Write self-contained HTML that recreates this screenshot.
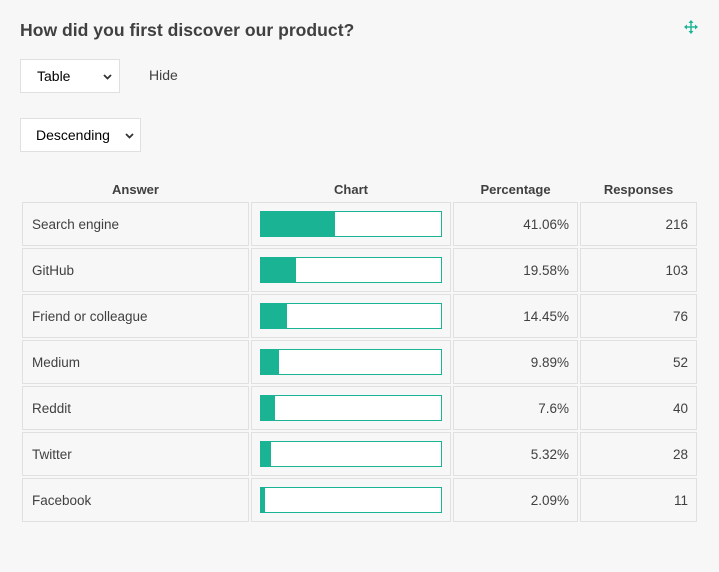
<!DOCTYPE html>
<html><head><style>
body{margin:0;width:719px;height:572px;background:#f7f7f7;font-family:"Liberation Sans",sans-serif;color:#404040;position:relative;overflow:hidden}
.a{position:absolute}
h1{position:absolute;left:20px;top:20px;margin:0;font-size:17.6px;font-weight:bold;color:#404040}
.sel{position:absolute;background:#fff;border:1px solid #e0e0e0;font-size:14px;color:#000;box-sizing:border-box}
.sel span{position:absolute;top:8px}
.sel svg{position:absolute}
.c{position:absolute;border:1px solid #e0e0e0;box-sizing:border-box;height:44px;font-size:13.5px;line-height:44px;color:#404040}
.th{position:absolute;top:182px;font-size:13px;font-weight:bold;text-align:center}
.bar{position:absolute;left:8px;top:8px;width:182px;height:26px;border:1px solid #1ab394;box-sizing:border-box;background:#fff}
.bar i{display:block;height:100%;background:#1ab394}
</style></head><body>
<h1>How did you first discover our product?</h1>
<svg class="a" style="left:683px;top:19px" width="16" height="16" viewBox="0 0 16 16" fill="#1ab394"><path d="M8 1 5.5 4h5zM8 15l-2.5-3h5zM1 8l3-2.5v5zM15 8l-3-2.5v5z"/><rect x="7.3" y="3" width="1.4" height="10"/><rect x="3" y="7.3" width="10" height="1.4"/></svg>
<div class="sel" style="left:20px;top:59px;width:100px;height:34px"><span style="left:16px">Table</span><svg style="left:82px;top:14px" width="9" height="6" viewBox="0 0 9 6"><path d="M1 1l3.5 3.5L8 1" stroke="#333" stroke-width="1.8" fill="none"/></svg></div>
<div class="a" style="left:149px;top:67px;font-size:14px;color:#404040">Hide</div>
<div class="sel" style="left:20px;top:118px;width:121px;height:34px"><span style="left:15px">Descending</span><svg style="left:104px;top:14px" width="9" height="6" viewBox="0 0 9 6"><path d="M1 1l3.5 3.5L8 1" stroke="#333" stroke-width="1.8" fill="none"/></svg></div>
<div class="th" style="left:22px;width:227px">Answer</div>
<div class="th" style="left:251px;width:200px">Chart</div>
<div class="th" style="left:453px;width:125px">Percentage</div>
<div class="th" style="left:580px;width:117px">Responses</div>
<div id="rows"></div>
<script>
var d=[["Search engine",41.06,216],["GitHub",19.58,103],["Friend or colleague",14.45,76],["Medium",9.89,52],["Reddit",7.6,40],["Twitter",5.32,28],["Facebook",2.09,11]];
var h="";d.forEach(function(r,i){var t=202+i*46;
h+='<div class="c" style="left:22px;top:'+t+'px;width:227px;padding-left:9px">'+r[0]+'</div>';
h+='<div class="c" style="left:251px;top:'+t+'px;width:200px"><div class="bar"><i style="width:'+r[1]+'%"></i></div></div>';
h+='<div class="c" style="left:453px;top:'+t+'px;width:125px;text-align:right;padding-right:8px">'+r[1]+'%</div>';
h+='<div class="c" style="left:580px;top:'+t+'px;width:117px;text-align:right;padding-right:8px">'+r[2]+'</div>';});
document.getElementById("rows").innerHTML=h;
</script>
</body></html>
